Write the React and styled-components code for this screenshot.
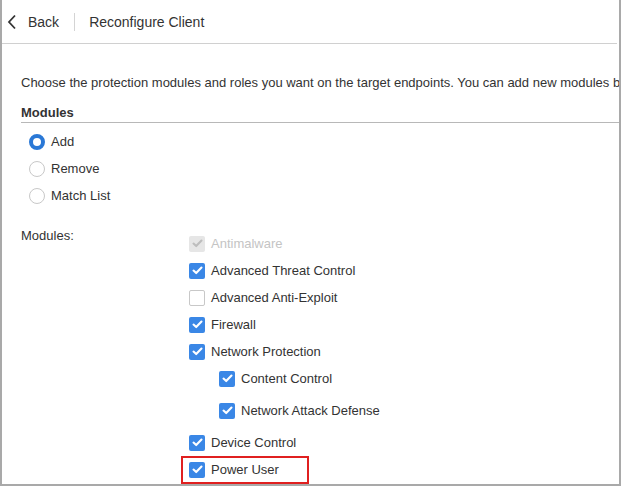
import React from "react";
import styled, { createGlobalStyle } from "styled-components";

const Global = createGlobalStyle`
  html, body { margin: 0; padding: 0; background: #fff; }
  body { font-family: "Liberation Sans", Arial, sans-serif; color: #333; }
`;

const Frame = styled.div`
  width: 621px;
  height: 486px;
  box-sizing: border-box;
  border-left: 2px solid #a9a9a9;
  border-right: 2px solid #a9a9a9;
  border-bottom: 2px solid #a9a9a9;
  overflow: hidden;
  background: #fff;
`;

const Header = styled.div`
  height: 43px;
  border-bottom: 1px solid #d0d0d0;
  display: flex;
  align-items: center;
  margin-right: 2px;
`;

const BackButton = styled.div`
  display: flex;
  align-items: center;
  gap: 11px;
  padding-left: 5px;
  font-size: 14px;
  color: #333;
  height: 100%;
`;

const Divider = styled.div`
  width: 1px;
  height: 18px;
  background: #d4d4d4;
  margin: 0 14px 0 15px;
`;

const Title = styled.div`
  font-size: 14px;
  color: #333;
`;

const Body = styled.div`
  padding: 31px 0 0 19px;
`;

const Desc = styled.div`
  font-size: 13px;
  line-height: 16px;
  white-space: nowrap;
`;

const SectionTitle = styled.div`
  margin-top: 14px;
  font-size: 13px;
  font-weight: bold;
  line-height: 16px;
  padding-bottom: 1px;
  border-bottom: 1px solid #b8b8b8;
`;

const RadioList = styled.div`
  display: flex;
  flex-direction: column;
  padding: 5px 0 0 8px;
`;

const RadioRow = styled.div`
  display: flex;
  align-items: center;
  height: 27px;
  gap: 6px;
  font-size: 13px;
`;

const Radio = styled.span`
  width: 16px;
  height: 16px;
  box-sizing: border-box;
  border-radius: 50%;
  border: ${(p) => (p.$on ? "4px solid #2a78d6" : "1px solid #c8c8c8")};
  background: #fff;
  flex: none;
`;

const ModulesGrid = styled.div`
  display: grid;
  grid-template-columns: 168px 1fr;
  margin-top: 19px;
`;

const FieldLabel = styled.div`
  font-size: 13px;
  line-height: 16px;
  padding-top: 0px;
`;

const CheckList = styled.div`
  display: flex;
  flex-direction: column;
  margin-top: 2px;
`;

const CheckRow = styled.div`
  display: flex;
  align-items: center;
  gap: 6px;
  height: ${(p) => p.$h || 27}px;
  padding-left: ${(p) => (p.$sub ? 30 : 0)}px;
  font-size: 13px;
  color: ${(p) => (p.$disabled ? "#c4c4c4" : "#333")};
`;

const Box = styled.span`
  width: 16px;
  height: 16px;
  box-sizing: border-box;
  border-radius: 2px;
  flex: none;
  display: flex;
  align-items: center;
  justify-content: center;
  background: ${(p) => (p.$disabled ? "#e6e6e6" : p.$on ? "#3a87e6" : "#fff")};
  border: ${(p) => (p.$on || p.$disabled ? "none" : "1px solid #c8c8c8")};
`;

const Highlight = styled.div`
  margin-left: -8px;
  width: 128px;
  height: 28px;
  box-sizing: border-box;
  border: 2px solid #e02020;
  padding-left: 6px;
  display: flex;
  align-items: center;
`;

const Tick = ({ color = "#fff" }) => (
  <svg width="11" height="9" viewBox="0 0 11 9">
    <path d="M1.5 4.6 L4.2 7.1 L9.5 1.6" fill="none" stroke={color} strokeWidth="2.1" strokeLinecap="round" strokeLinejoin="round" />
  </svg>
);

const Check = ({ on, disabled, children, sub, h }) => (
  <CheckRow $sub={sub} $h={h} $disabled={disabled}>
    <Box $on={on} $disabled={disabled}>
      {(on || disabled) && <Tick color={disabled ? "#bdbdbd" : "#fff"} />}
    </Box>
    {children}
  </CheckRow>
);

export default function App() {
  return (
    <>
      <Global />
      <Frame>
        <Header>
          <BackButton>
            <svg width="10" height="16" viewBox="0 0 10 16">
              <path d="M8 1.5 L2 8 L8 14.5" fill="none" stroke="#333" strokeWidth="1.8" />
            </svg>
            Back
          </BackButton>
          <Divider />
          <Title>Reconfigure Client</Title>
        </Header>
        <Body>
          <Desc>
            Choose the protection modules and roles you want on the target endpoints. You can add new modules by selecting them
          </Desc>
          <SectionTitle>Modules</SectionTitle>
          <RadioList>
            <RadioRow><Radio $on />Add</RadioRow>
            <RadioRow><Radio />Remove</RadioRow>
            <RadioRow><Radio />Match List</RadioRow>
          </RadioList>
          <ModulesGrid>
            <FieldLabel>Modules:</FieldLabel>
            <CheckList>
              <Check disabled>Antimalware</Check>
              <Check on>Advanced Threat Control</Check>
              <Check>Advanced Anti-Exploit</Check>
              <Check on>Firewall</Check>
              <Check on>Network Protection</Check>
              <Check on sub>Content Control</Check>
              <Check on sub h={37}>Network Attack Defense</Check>
              <Check on>Device Control</Check>
              <CheckRow>
                <Highlight>
                  <CheckRow>
                    <Box $on><Tick /></Box>
                    Power User
                  </CheckRow>
                </Highlight>
              </CheckRow>
            </CheckList>
          </ModulesGrid>
        </Body>
      </Frame>
    </>
  );
}
